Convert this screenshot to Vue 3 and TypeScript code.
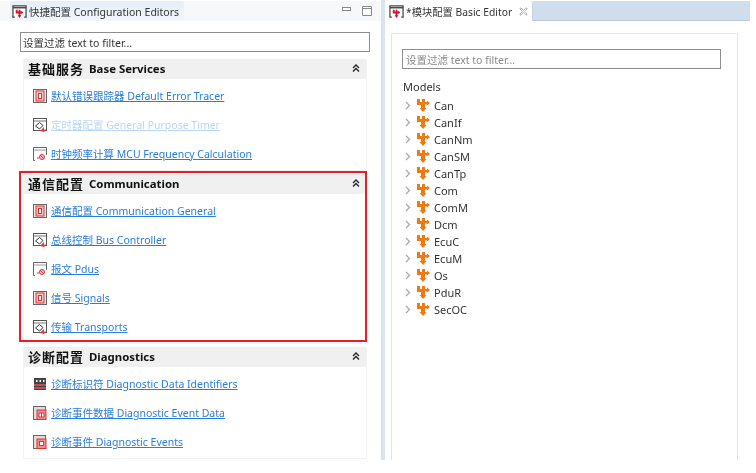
<script setup lang="ts">
type Kind = 'chip' | 'gauge' | 'clock' | 'table' | 'calc' | 'event'
interface Item { text: string; icon: Kind; faded?: boolean }
interface Section { title: string; en: string; highlight?: boolean; items: Item[] }

const sections: Section[] = [
  { title: '基础服务', en: 'Base Services', items: [
    { text: '默认错误跟踪器 Default Error Tracer', icon: 'chip' },
    { text: '定时器配置 General Purpose Timer', icon: 'gauge', faded: true },
    { text: '时钟频率计算 MCU Frequency Calculation', icon: 'clock' },
  ] },
  { title: '通信配置', en: 'Communication', highlight: true, items: [
    { text: '通信配置 Communication General', icon: 'chip' },
    { text: '总线控制 Bus Controller', icon: 'gauge' },
    { text: '报文 Pdus', icon: 'clock' },
    { text: '信号 Signals', icon: 'chip' },
    { text: '传输 Transports', icon: 'gauge' },
  ] },
  { title: '诊断配置', en: 'Diagnostics', items: [
    { text: '诊断标识符 Diagnostic Data Identifiers', icon: 'table' },
    { text: '诊断事件数据 Diagnostic Event Data', icon: 'calc' },
    { text: '诊断事件 Diagnostic Events', icon: 'event' },
  ] },
]
const models = ['Can', 'CanIf', 'CanNm', 'CanSM', 'CanTp', 'Com', 'ComM', 'Dcm', 'EcuC', 'EcuM', 'Os', 'PduR', 'SecOC']
const puzzle = 'M1 1h3v3h2V1h3v3h2V2.500L14 5l-3 2.500V6.500H9V10h1.500L7 14 3.500 10H5V7H1z'
</script>

<template>
  <div class="page">
    <section class="left">
      <header class="tabbar">
        <div class="tab left-tab">
          <svg class="tabicon" viewBox="0 0 16 16"><path d="M3 14H1V2h14v12h-2" fill="#fff" stroke="#444" stroke-width="1.300"/><path d="M1 4h14" stroke="#444" stroke-width="1.500"/><path d="M4 6h2v2h1V6h2v2h1V7l2 2-2 2v-1H9v2h1l-2 3-2-3h1v-2H4z" fill="#d3142a"/></svg>
          <span>快捷配置 Configuration Editors</span>
        </div>
        <div class="winbtns">
          <svg viewBox="0 0 9 4" width="9" height="4"><rect x=".5" y=".5" width="8" height="3" fill="#fff" stroke="#8a8a8a"/></svg>
          <svg viewBox="0 0 10 10" width="10" height="10"><path d="M.5.500h9v9h-9zM.5 2.500h9" fill="#fff" stroke="#8a8a8a"/></svg>
        </div>
      </header>
      <div class="filter main-filter">设置过滤 text to filter...</div>
      <div class="sections">
        <div v-for="s in sections" :key="s.en" class="block" :class="{ marked: s.highlight }">
          <div class="head">
            <span class="cn">{{ s.title }}</span>
            <span class="en">{{ s.en }}</span>
            <svg class="fold" viewBox="0 0 8 8" width="8" height="8"><path d="M1 4l3-3 3 3M1 7.500l3-3 3 3" fill="none" stroke="#222" stroke-width="1.300"/></svg>
          </div>
          <ul class="links">
            <li v-for="i in s.items" :key="i.text" :class="{ faded: i.faded }">
              <svg class="icon" viewBox="0 0 14 14" width="14" height="14">
                <template v-if="i.icon === 'chip'">
                  <rect x=".5" y=".5" width="13" height="13" fill="#eee" stroke="#666"/>
                  <rect x="3" y="2" width="8" height="10" fill="#f6c9c9" stroke="#d33"/>
                  <rect x="5.500" y="4.500" width="3" height="5" fill="#fff" stroke="#d33"/>
                </template>
                <template v-else-if="i.icon === 'gauge'">
                  <rect x=".5" y=".5" width="13" height="12" fill="#fff" stroke="#555"/>
                  <path d="M1 3h12" stroke="#777"/>
                  <path d="M2.500 8l4-3.500 3.500 3-3.500 3.500z" fill="#fff" stroke="#333"/>
                  <path d="M7 13l4-4v3l2-1-2 3z" fill="#e33"/>
                </template>
                <template v-else-if="i.icon === 'clock'">
                  <path d="M2 13.500H.5V.500h13V8" fill="#fff" stroke="#666"/>
                  <path d="M1 3h12" stroke="#999"/>
                  <circle cx="9" cy="10" r="2.500" fill="#fbe" stroke="#d33"/>
                  <path d="M4 11h2M7 8l4 4" stroke="#d33"/>
                </template>
                <template v-else-if="i.icon === 'table'">
                  <rect x="1" y="1" width="12" height="12" fill="#444"/>
                  <path d="M3 3h1.500v2H3zM6.500 3H8v2H6.500zM10 3h1.500v2H10z" fill="#fff"/>
                  <path d="M1 8h12M1 11h12" stroke="#e2555a" stroke-width="1.500"/>
                </template>
                <template v-else>
                  <rect x=".5" y=".5" width="12" height="13" fill="#ddd" stroke="#666"/>
                  <rect x="4" y="4" width="9" height="9.500" fill="#f08f8f" stroke="#d33"/>
                  <path v-if="i.icon === 'calc'" d="M6 7h5v4H6zM8.500 7v4" fill="#fff" stroke="#d33"/>
                  <rect v-else x="6.500" y="6.500" width="4" height="4" fill="#fff" stroke="#d33"/>
                </template>
              </svg>
              <a>{{ i.text }}</a>
            </li>
          </ul>
        </div>
      </div>
    </section>

    <div class="divider"></div>

    <section class="right">
      <header class="tabbar righttabs">
        <div class="tab right-tab">
          <svg class="tabicon" viewBox="0 0 16 16"><path d="M3 14H1V2h14v12h-2" fill="#fff" stroke="#444" stroke-width="1.300"/><path d="M1 4h14" stroke="#444" stroke-width="1.500"/><path d="M4 6h2v2h1V6h2v2h1V7l2 2-2 2v-1H9v2h1l-2 3-2-3h1v-2H4z" fill="#d3142a"/></svg>
          <span>*模块配置 Basic Editor</span>
          <svg class="close" viewBox="0 0 9 9" width="9" height="9"><path d="M1 1h1l2.500 2.500L7 1h1v1L5.500 4.500 8 7v1H7L4.500 5.500 2 8H1V7l2.500-2.500L1 2z" fill="#fff" stroke="#999" stroke-width=".7"/></svg>
        </div>
        <div class="tabfill"></div>
      </header>
      <div class="card">
        <div class="filter tree-filter">设置过滤 text to filter...</div>
        <div class="models-label">Models</div>
        <ul class="tree">
          <li v-for="m in models" :key="m">
            <svg class="chev" viewBox="0 0 6 9" width="6" height="9"><path d="M1 1l3.500 3.500L1 8" fill="none" stroke="#a8a8a8" stroke-width="1.200"/></svg>
            <svg class="puzzle" viewBox="0 0 15 15" width="15" height="15"><path :d="puzzle" fill="#ef7a12"/></svg>
            <span>{{ m }}</span>
          </li>
        </ul>
      </div>
    </section>
  </div>
</template>

<style>
html, body { margin: 0; background: #fff; }
</style>

<style scoped>
.page {
  width: 756px; height: 460px; overflow: hidden; display: flex; background: #fff;
  font-family: "Noto Sans", "Noto Sans CJK SC", sans-serif; font-size: 11px; color: #333;
  filter: blur(0.3px);
}
.left { width: 381px; flex: none; display: flex; flex-direction: column; }
.divider { width: 4px; flex: none; background: #dbe3f1; }
.right { width: 365px; flex: none; display: flex; flex-direction: column; }
.tabbar { height: 20px; margin-top: 1px; display: flex; align-items: stretch; flex: none; }
.left .tabbar { background: #f7f8fa; }
.tab { display: flex; align-items: center; gap: 2px; white-space: nowrap; color: #333; font-size: 10.5px; }
.left-tab { width: 174px; margin-left: 10px; padding-left: 2px; box-sizing: border-box; background: linear-gradient(#e6eef8, #f3f6fa); border-radius: 3px 3px 0 0; }
.tabicon { width: 15px; height: 15px; flex: none; }
.winbtns { margin-left: auto; display: flex; align-items: center; gap: 11px; padding-right: 9px; }
.winbtns svg:first-child { margin-bottom: 4px; }
.filter { box-sizing: border-box; height: 20px; border: 1px solid #8e8e8e; background: #fff; display: flex; align-items: center; padding-left: 2px; font-size: 10.5px; }
.main-filter { margin: 11px 11px 0 20px; color: #333; }
.sections { display: flex; flex-direction: column; margin: 7px 14px 0 23px; }
.block { position: relative; border: 1px solid #f3f3f3; border-top: 0; box-sizing: border-box; }
.block + .block { margin-top: 3px; }
.marked::after {
  content: ""; position: absolute; left: -5px; right: -1px; top: -3px; bottom: 1px;
  border: 2px solid #ed1c24; pointer-events: none;
}
.head { box-sizing: border-box; height: 20px; padding: 0 6px 2px 4px; background: #f0f0f0; display: flex; align-items: center; color: #111; font-weight: 700; }
.cn { font-size: 13px; letter-spacing: 1px; margin-right: 5px; }
.en { font-size: 11.4px; }
.fold { margin-left: auto; }
.links { list-style: none; margin: 0; padding: 2px 0 2px 9px; }
.links li { height: 29px; display: flex; align-items: center; gap: 4px; font-size: 10.5px; }
.links a { color: #2a7ddc; text-decoration: underline; white-space: nowrap; }
.faded a { color: #b9d6f4; }
.icon { flex: none; }
.righttabs { background: #fff; }
.right-tab { width: 148px; padding-left: 4px; box-sizing: border-box; border-right: 1px solid #c7d3e2; border-radius: 0 3px 0 0; font-size: 10.3px; }
.close { margin-left: 5px; }
.tabfill { flex: 0 0 217px; background-color: #cfddec; border-bottom: 1px solid #b9cbe0; box-sizing: border-box; }
.card { margin: 12px 12px 0 6px; flex: 1; border: 1px solid #e4e4e4; border-bottom: 0; padding: 15px 0 0 10px; display: flex; flex-direction: column; }
.tree-filter { width: 319px; color: #8a8a8a; flex: none; padding-left: 3px; }
.models-label { margin-top: 9px; line-height: 17px; padding-left: 1px; }
.tree { list-style: none; margin: 2px 0 0; padding: 0 0 0 3px; }
.tree li { height: 17px; display: flex; align-items: center; }
.chev { margin-right: 5px; }
.puzzle { margin-right: 3px; }
</style>
